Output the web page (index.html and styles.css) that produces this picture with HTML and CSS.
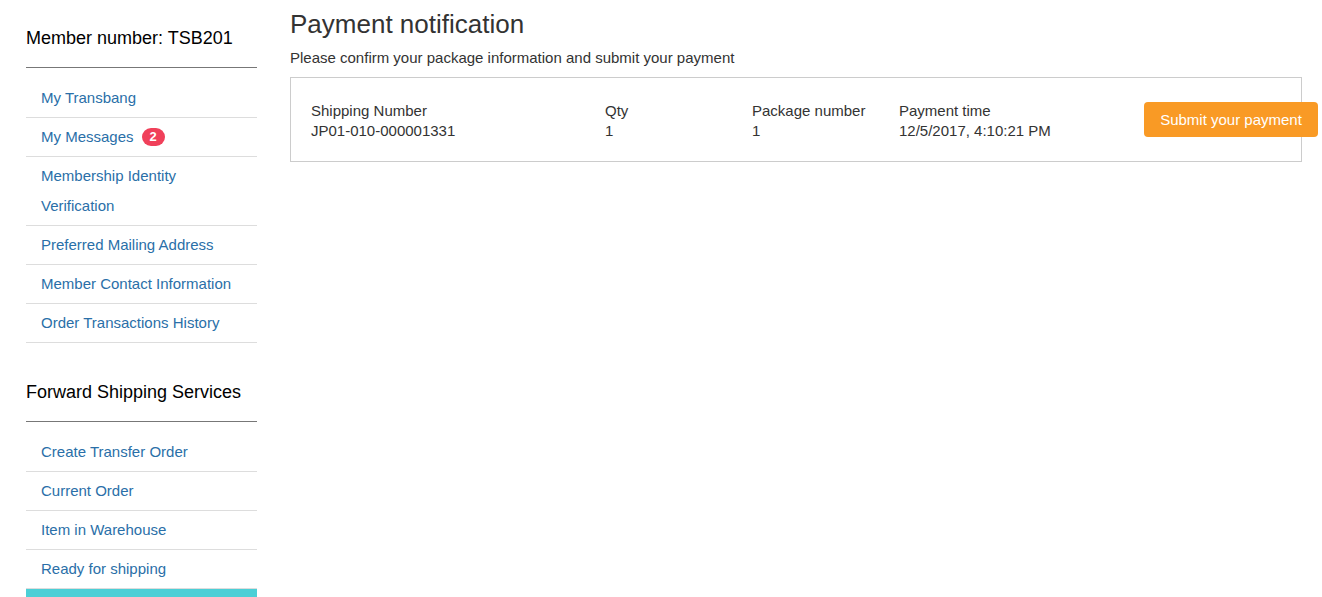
FILE: index.html
```html
<!DOCTYPE html>
<html lang="en">
<head>
  <meta charset="UTF-8" />
  <title>Payment notification</title>
  <link rel="stylesheet" href="styles.css">
</head>
<body>

  <div class="page">
    <aside class="sidebar">
      <div class="side-title">Member number: TSB201</div>
      <ul class="side-menu">
        <li><a href="#">My Transbang</a></li>
        <li><a href="#">My Messages <span class="badge">2</span></a></li>
        <li><a href="#">Membership Identity Verification</a></li>
        <li><a href="#">Preferred Mailing Address</a></li>
        <li><a href="#">Member Contact Information</a></li>
        <li><a href="#">Order Transactions History</a></li>
      </ul>

      <div class="side-title second">Forward Shipping Services</div>
      <ul class="side-menu">
        <li><a href="#">Create Transfer Order</a></li>
        <li><a href="#">Current Order</a></li>
        <li><a href="#">Item in Warehouse</a></li>
        <li><a href="#">Ready for shipping</a></li>
        <li class="active"></li>
      </ul>
    </aside>

    <main class="content">
      <h1>Payment notification</h1>
      <p class="lead">Please confirm your package information and submit your payment</p>

      <div class="package-box">
        <div class="col col-ship">
          <div>Shipping Number</div>
          <div>JP01-010-000001331</div>
        </div>
        <div class="col col-qty">
          <div>Qty</div>
          <div>1</div>
        </div>
        <div class="col col-pkg">
          <div>Package number</div>
          <div>1</div>
        </div>
        <div class="col col-time">
          <div>Payment time</div>
          <div>12/5/2017, 4:10:21 PM</div>
        </div>
        <button class="pay-btn">Submit your payment</button>
      </div>
    </main>
  </div>

</body>
</html>
```

FILE: styles.css
```css
* {
  box-sizing: border-box;
}

body {
  margin: 0;
  background-color: #fff;
  color: #333;
  font-family: "Liberation Sans", Arial, sans-serif;
  font-size: 15px;
  overflow: hidden;
}

.page {
  display: flex;
  gap: 33px;
  padding-left: 26px;
}

/* sidebar */
.sidebar {
  width: 231px;
  flex-shrink: 0;
}

.side-title {
  font-size: 18px;
  line-height: 26px;
  color: #000;
  padding: 25px 0 16px;
  border-bottom: 1px solid #777;
}
.side-title.second {
  margin-top: 11px;
}

.side-menu {
  list-style: none;
  margin: 11px 0 0;
  padding: 0;
}
.side-menu li {
  border-bottom: 1px solid #ddd;
  padding: 4px 15px;
  line-height: 30px;
}
.side-menu li.active {
  height: 39px;
  background-color: #4ccfd6;
  border-bottom-color: #4ccfd6;
}
.side-menu a {
  color: #2a6fa8;
  text-decoration: none;
}
.side-menu li:nth-child(3) a {
  display: block;
  width: 160px;
}

.badge {
  display: inline-block;
  min-width: 23px;
  height: 18px;
  line-height: 18px;
  padding: 0 6px;
  margin-left: 4px;
  border-radius: 9px;
  background-color: #f0405a;
  color: #fff;
  font-size: 13px;
  font-weight: bold;
  text-align: center;
  vertical-align: 1px;
}

/* main */
.content {
  width: 1012px;
}

h1 {
  font-size: 26px;
  font-weight: normal;
  line-height: 30px;
  margin: 9px 0 0;
  color: #333;
}

.lead {
  margin: 9px 0 0;
  line-height: 20px;
}

.package-box {
  display: flex;
  align-items: center;
  margin-top: 9px;
  height: 85px;
  padding: 2px 0 0 20px;
  border: 1px solid #ccc;
  line-height: 20px;
}

.col-ship { width: 294px; }
.col-qty  { width: 147px; }
.col-pkg  { width: 147px; }
.col-time { width: 245px; }

.pay-btn {
  width: 174px;
  margin-right: -17px;
  margin-top: -3px;
  height: 35px;
  padding: 0;
  border: none;
  border-radius: 4px;
  background-color: #f99a25;
  color: #fff;
  font-family: inherit;
  font-size: 15px;
  cursor: pointer;
}
```
